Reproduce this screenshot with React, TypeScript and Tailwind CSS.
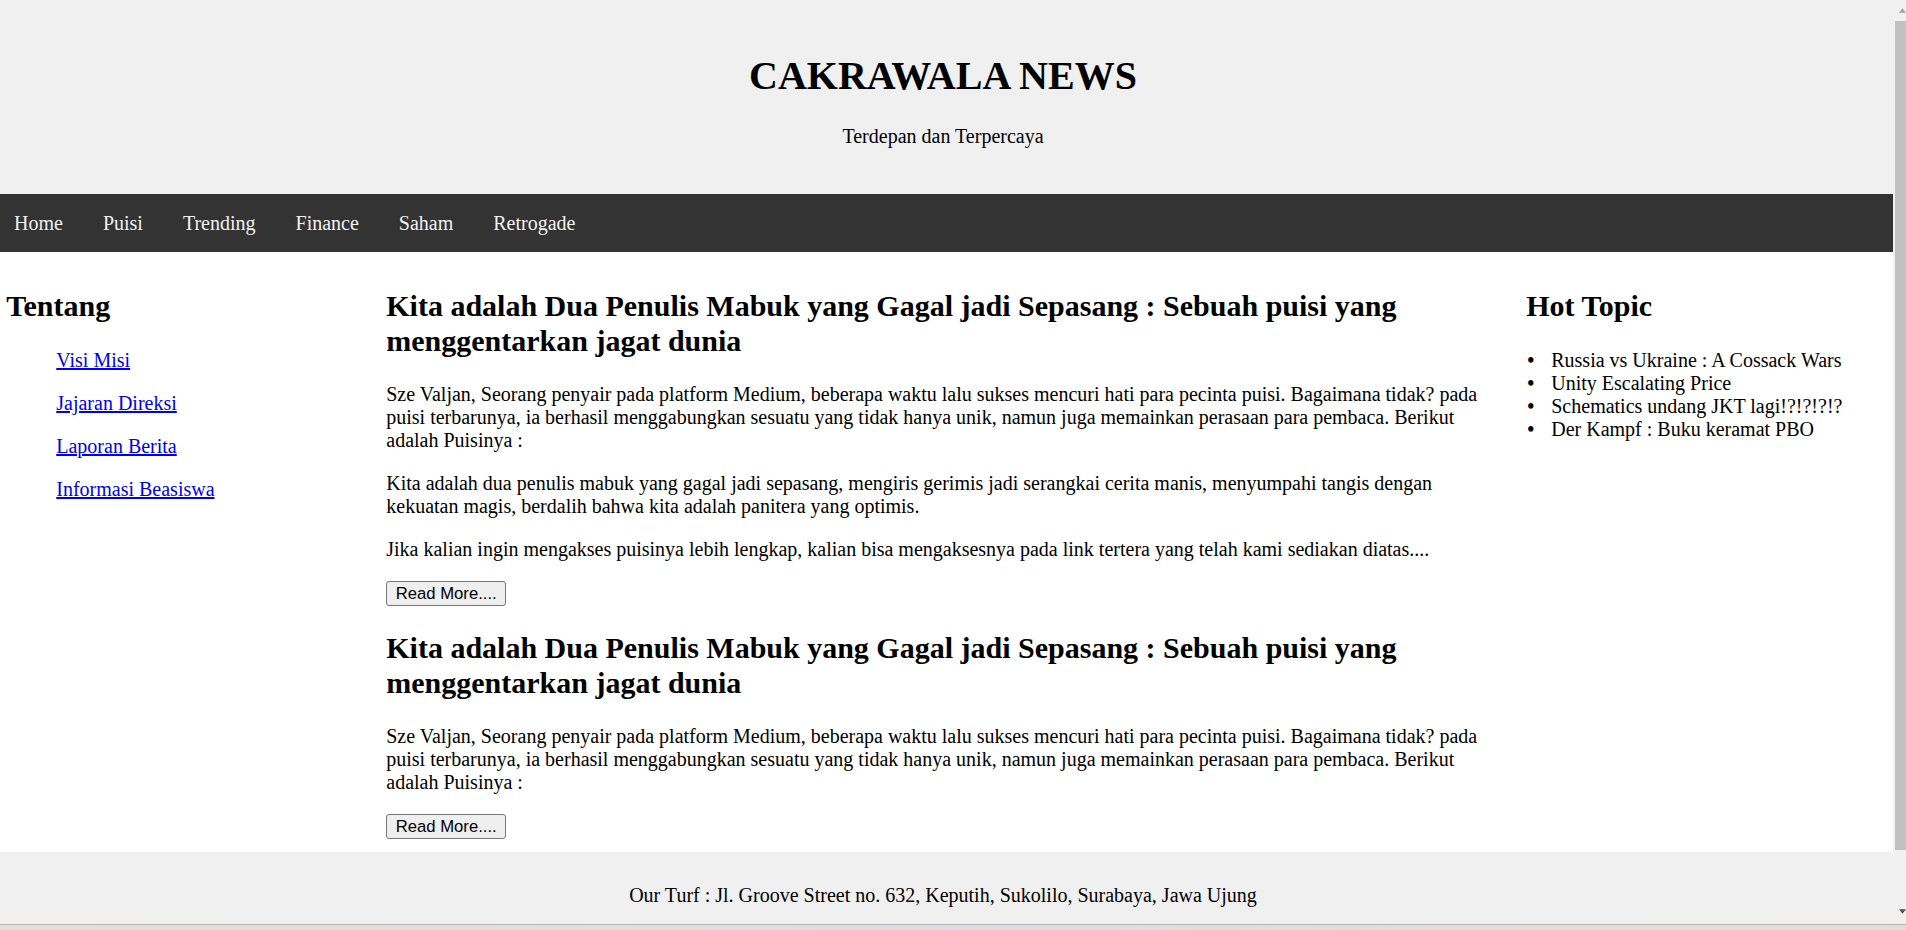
import React from "react";

const navItems = ["Home", "Puisi", "Trending", "Finance", "Saham", "Retrogade"];
const sideLinks = ["Visi Misi", "Jajaran Direksi", "Laporan Berita", "Informasi Beasiswa"];
const hotTopics = [
  "Russia vs Ukraine : A Cossack Wars",
  "Unity Escalating Price",
  "Schematics undang JKT lagi!?!?!?!?",
  "Der Kampf : Buku keramat PBO",
];

const TITLE =
  "Kita adalah Dua Penulis Mabuk yang Gagal jadi Sepasang : Sebuah puisi yang menggentarkan jagat dunia";
const P1 =
  "Sze Valjan, Seorang penyair pada platform Medium, beberapa waktu lalu sukses mencuri hati para pecinta puisi. Bagaimana tidak? pada puisi terbarunya, ia berhasil menggabungkan sesuatu yang tidak hanya unik, namun juga memainkan perasaan para pembaca. Berikut adalah Puisinya :";
const P2 =
  "Kita adalah dua penulis mabuk yang gagal jadi sepasang, mengiris gerimis jadi serangkai cerita manis, menyumpahi tangis dengan kekuatan magis, berdalih bahwa kita adalah panitera yang optimis.";
const P3 =
  "Jika kalian ingin mengakses puisinya lebih lengkap, kalian bisa mengaksesnya pada link tertera yang telah kami sediakan diatas....";

function ReadMore() {
  return (
    <button className="self-start mt-[20px] h-[25px] px-[8.5px] bg-[#efefef] border border-[#767676] rounded-[3px] font-['Liberation_Sans',Arial,sans-serif] text-[16.67px] leading-[19px] text-black">
      Read More....
    </button>
  );
}

function Scrollbar() {
  return (
    <div className="w-[13px] h-[924px] bg-[#f1f1f1] flex flex-col">
      <div className="h-[21px] flex items-center pl-[6px]">
        <svg width="8" height="5" viewBox="0 0 8 5">
          <polygon points="0,5 4,0 8,5" fill="#a3a3a3" />
        </svg>
      </div>
      <div className="ml-[2px] h-[829px] bg-[#c1c1c1]" />
      <div className="flex-1 flex items-end pb-[10px] pl-[6px]">
        <svg width="8" height="5" viewBox="0 0 8 5">
          <polygon points="0,0 8,0 4,5" fill="#505050" />
        </svg>
      </div>
    </div>
  );
}

export default function App() {
  return (
    <div className="w-[1906px] h-[930px] overflow-hidden flex flex-col bg-white text-black font-['Liberation_Serif','Times_New_Roman',serif]">
      <div className="flex h-[924px]">
        <div className="w-[1893px] h-[924px] flex flex-col overflow-hidden bg-white">
          <header className="h-[194px] bg-[#f0f0f0] pt-[52.7px] pr-[7px] text-center flex flex-col">
            <h1 className="text-[40px] leading-[46px] font-bold">CAKRAWALA NEWS</h1>
            <p className="mt-[26.8px] text-[20px] leading-[23px]">Terdepan dan Terpercaya</p>
          </header>
          <nav className="h-[58px] bg-[#333333] flex items-center">
            <div className="flex -ml-[6px]">
              {navItems.map((n) => (
                <a key={n} className="px-[20px] text-[20px] leading-[23px] text-[#f2f2f2] no-underline">
                  {n}
                </a>
              ))}
            </div>
          </nav>
          <main className="flex">
            <section className="w-[380px] px-[6.25px] py-[12.5px] flex flex-col">
              <h2 className="mt-[24.9px] text-[30px] leading-[34.5px] font-bold">Tentang</h2>
              <ul className="mt-[24.9px] pl-[50px] list-none flex flex-col gap-[20px]">
                {sideLinks.map((l) => (
                  <li key={l} className="text-[20px] leading-[23px]">
                    <a className="text-[#0000ee] underline">{l}</a>
                  </li>
                ))}
              </ul>
            </section>
            <section className="w-[1140px] pl-[6.25px] pr-[25px] py-[12.5px] flex flex-col">
              <h2 className="mt-[24.9px] text-[30px] leading-[34.5px] font-bold">{TITLE}</h2>
              <p className="mt-[24.9px] text-[20px] leading-[23px]">{P1}</p>
              <p className="mt-[20px] text-[20px] leading-[23px]">{P2}</p>
              <p className="mt-[20px] text-[20px] leading-[23px]">{P3}</p>
              <ReadMore />
              <h2 className="mt-[24.9px] text-[30px] leading-[34.5px] font-bold">{TITLE}</h2>
              <p className="mt-[24.9px] text-[20px] leading-[23px]">{P1}</p>
              <ReadMore />
            </section>
            <section className="flex-1 px-[6.25px] py-[12.5px] flex flex-col">
              <h2 className="mt-[24.9px] text-[30px] leading-[34.5px] font-bold">Hot Topic</h2>
              <ul className="mt-[24.9px] list-none">
                {hotTopics.map((t) => (
                  <li key={t} className="flex text-[20px] leading-[23px]">
                    <span className="w-[25px] shrink-0 pl-[1px] font-bold">•</span>
                    <span>{t}</span>
                  </li>
                ))}
              </ul>
            </section>
          </main>
          <footer className="flex-1 bg-[#f0f0f0] pt-[32.5px] pr-[7px] text-center">
            <p className="text-[20px] leading-[23px]">
              Our Turf : Jl. Groove Street no. 632, Keputih, Sukolilo, Surabaya, Jawa Ujung
            </p>
          </footer>
        </div>
        <Scrollbar />
      </div>
      <div className="h-[6px] border-t border-[#b4b4b4] bg-gradient-to-r from-[#e6dfd6] via-[#dcdde2] to-[#e4ddd4]" />
    </div>
  );
}
